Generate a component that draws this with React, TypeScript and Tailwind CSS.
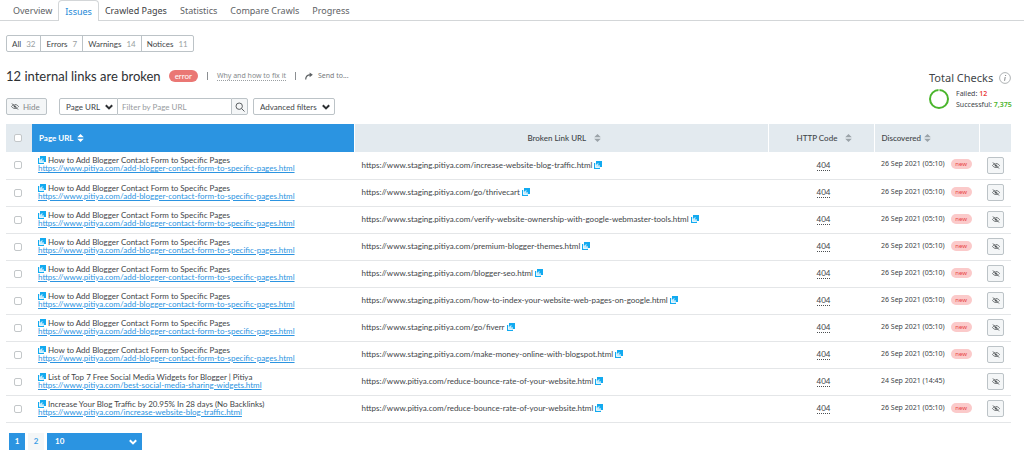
import React from "react";

const title = "How to Add Blogger Contact Form to Specific Pages";
const url = "https://www.pitiya.com/add-blogger-contact-form-to-specific-pages.html";
const base = "https://www.staging.pitiya.com/";
const recent = "26 Sep 2021 (05:10)";

type Row = { title: string; url: string; broken: string; date: string; fresh: boolean };

const rows: Row[] = [
  ...[
    "increase-website-blog-traffic.html",
    "go/thrivecart",
    "verify-website-ownership-with-google-webmaster-tools.html",
    "premium-blogger-themes.html",
    "blogger-seo.html",
    "how-to-index-your-website-web-pages-on-google.html",
    "go/fiverr",
    "make-money-online-with-blogspot.html",
  ].map((path) => ({ title, url, broken: base + path, date: recent, fresh: true })),
  {
    title: "List of Top 7 Free Social Media Widgets for Blogger | Pitiya",
    url: "https://www.pitiya.com/best-social-media-sharing-widgets.html",
    broken: "https://www.pitiya.com/reduce-bounce-rate-of-your-website.html",
    date: "24 Sep 2021 (14:45)",
    fresh: false,
  },
  {
    title: "Increase Your Blog Traffic by 20.95% In 28 days (No Backlinks)",
    url: "https://www.pitiya.com/increase-website-blog-traffic.html",
    broken: "https://www.pitiya.com/reduce-bounce-rate-of-your-website.html",
    date: recent,
    fresh: true,
  },
];

function Sort({ className }: { className: string }) {
  return (
    <svg viewBox="0 0 7 8" className={`inline-block h-2 w-[7px] shrink-0 ${className}`} fill="currentColor" aria-hidden="true">
      <path d="M3.5 0 6.8 3.3H.2zM3.5 8 .2 4.7h6.6z" />
    </svg>
  );
}

function External() {
  return (
    <svg viewBox="0 0 8 8" className="inline-block size-2 shrink-0" aria-hidden="true">
      <path d="M0 2h1.2v4.8H6V8H0z" fill="#12aaf0" />
      <path d="M2 0h6v6H2z" fill="#12aaf0" />
      <path d="M1.2 6.8V4.6L3.6 2.4h1.6L4 3.8l.9.9 1-1v2.1L4.4 6.8z" fill="white" opacity=".75" />
    </svg>
  );
}

function EyeOff({ className }: { className: string }) {
  return (
    <svg viewBox="0 0 16 14" className={`shrink-0 ${className}`} fill="none" stroke="currentColor" strokeWidth="1.4" aria-hidden="true">
      <path d="M1 7c3.4-5.3 10.6-5.3 14 0-3.4 5.3-10.6 5.3-14 0z" />
      <circle cx="8" cy="7" r="1.6" fill="currentColor" />
      <path d="M3.4.2 15.4 12.2" stroke="#f4f6f7" strokeWidth="1.6" />
      <path d="M2 1l12 12" strokeWidth="1.8" />
    </svg>
  );
}

function Chevron({ className }: { className: string }) {
  return (
    <svg viewBox="0 0 8 6" className={`pointer-events-none absolute h-1.5 w-2 ${className}`} fill="none" stroke="currentColor" strokeWidth="2" aria-hidden="true">
      <path d="M.8 1.2 4 4.4l3.2-3.2" />
    </svg>
  );
}

const tabs = ["Overview", "Issues", "Crawled Pages", "Statistics", "Compare Crawls", "Progress"];
const filters = [["All", "32"], ["Errors", "7"], ["Warnings", "14"], ["Notices", "11"]];
const box = "block size-2 appearance-none rounded-[2px] border border-[#c3c7c9] bg-white";

export default function App() {
  return (
    <main className="bg-white font-[Lato,sans-serif] text-[8px] leading-2 text-[#414548]">
      <nav className="flex h-[21px] border-b border-[#d3d6d8] font-['Noto_Sans',sans-serif] text-[9px] text-[#5e6265]">
        {tabs.map((tab) => (
          <a
            key={tab}
            href="#"
            className={
              tab === "Issues"
                ? "mr-[6px] -mb-px ml-[6px] flex items-center rounded-t-sm border border-b-0 border-[#d3d6d8] bg-white px-[6px] pt-px text-[#2489d8]"
                : tab === "Crawled Pages"
                  ? "mr-[13px] flex items-center pt-px text-[#3c4043]"
                  : tab === "Overview"
                    ? "ml-[13px] flex items-center pt-px"
                    : "mr-[13px] flex items-center pt-px"
            }
          >
            {tab}
          </a>
        ))}
      </nav>

      <div className="pr-[13px] pl-[6px]">
        <div className="flex pt-[14px]">
          <div className="flex h-[17px] divide-x divide-[#bcc3c7] rounded-[2px] border border-[#bcc3c7]">
            {filters.map(([name, count]) => (
              <button key={name} type="button" className="flex items-center gap-[5px] px-[5px]">
                {name} <span className="text-[#9a9fa2]">{count}</span>
              </button>
            ))}
          </div>
        </div>

        <div className="flex items-end justify-between pt-[14px]">
          <div>
            <div className="flex h-5 items-center">
              <h1 className="text-[13px] leading-5 text-[#2d3033]">12 internal links are broken</h1>
              <span className="ml-2 flex h-3 items-center rounded-full bg-[#ea7774] px-[6px] text-white">error</span>
              <span className="mx-[9px] h-2 w-px bg-[#8b8f92]" />
              <a href="#" className="border-b border-dotted border-[#9a9fa2] font-['Noto_Sans',sans-serif] text-[7px] text-[#85898c]">Why and how to fix it</a>
              <span className="mx-[9px] h-2 w-px bg-[#8b8f92]" />
              <button type="button" className="flex items-center gap-[5px] font-['Noto_Sans',sans-serif] text-[7px] text-[#76797c]">
                <svg viewBox="0 0 8 8" className="size-2" fill="none" stroke="#5b5f62" strokeWidth="1.2" aria-hidden="true">
                  <path d="M.7 7.5C.7 4.4 2.5 2.8 5 2.8" />
                  <path d="M4.6.4 7.8 2.8 4.6 5.2z" fill="#5b5f62" stroke="none" />
                </svg>
                Send to...
              </button>
            </div>
            <div className="mt-3 flex h-[17px]">
              <button type="button" className="flex w-[41px] items-center gap-[4px] rounded-[2px] border border-[#bcc3c7] bg-[#f4f6f7] pl-[4px] text-[#85898c]">
                <EyeOff className="h-[7px] w-2 text-[#44484b]" />
                Hide
              </button>
              <div className="relative ml-3 w-[59px]">
                <select aria-label="Filter field" className="h-full w-full appearance-none rounded-l-[2px] border border-[#bcc3c7] bg-white pl-[6px]">
                  <option>Page URL</option>
                </select>
                <Chevron className="top-[6px] right-[5px] text-[#2d3033]" />
              </div>
              <input aria-label="Filter by Page URL" placeholder="Filter by Page URL" className="w-[113px] border-y border-[#bcc3c7] px-[4px] placeholder:text-[#979b9e]" />
              <button type="button" aria-label="Search" className="flex w-[17px] items-center justify-center rounded-r-[2px] border border-[#bcc3c7] bg-[#f4f6f7]">
                <svg viewBox="0 0 10 10" className="size-[10px]" fill="none" stroke="#5b5f62" aria-hidden="true">
                  <circle cx="4.2" cy="4.2" r="3.2" />
                  <path d="m6.6 6.6 2.9 2.9" />
                </svg>
              </button>
              <div className="relative ml-[5px] w-[82px]">
                <select aria-label="Advanced filters" className="h-full w-full appearance-none rounded-[2px] border border-[#bcc3c7] bg-white pl-[6px]">
                  <option>Advanced filters</option>
                </select>
                <Chevron className="top-[6px] right-[5px] text-[#2d3033]" />
              </div>
            </div>
          </div>

          <section className="w-[82px] pb-[5px] font-['Noto_Sans',sans-serif] text-[7px]">
            <h2 className="flex items-center justify-between text-[11px] leading-3 whitespace-nowrap">
              Total Checks
              <svg viewBox="0 0 12 12" className="size-3" fill="none" aria-label="Info">
                <circle cx="6" cy="6" r="5.4" stroke="#9a9fa2" strokeWidth=".8" />
                <path d="M6.2 5 5.6 8.8M6.6 3v1" stroke="#85898c" />
              </svg>
            </h2>
            <div className="mt-[4px] flex items-center gap-[7px]">
              <svg viewBox="0 0 20 20" className="size-5 shrink-0" fill="none" aria-hidden="true">
                <circle cx="10" cy="10" r="9" stroke="#4ab52c" strokeWidth="2" />
                <path d="M10 0v2.2" stroke="white" />
              </svg>
              <div className="leading-[11px] whitespace-nowrap">
                <p>Failed: <b className="font-semibold text-[#ea3f3f]">12</b></p>
                <p>Successful: <b className="font-semibold text-[#4ab52c]">7,375</b></p>
              </div>
            </div>
          </section>
        </div>

        <table className="mt-[9px] w-full table-fixed border-collapse text-left">
          <colgroup>
            <col className="w-[26px]" />
            <col className="w-[32.1%]" />
            <col />
            <col className="w-[106px]" />
            <col className="w-[105px]" />
            <col className="w-[32px]" />
          </colgroup>
          <thead>
            <tr className="h-7 bg-[#e3eaef]">
              <th className="pl-2"><input type="checkbox" aria-label="Select all rows" className={box} /></th>
              <th className="bg-[#2b94e1] pl-[7px] font-bold text-white">
                <span className="flex items-center gap-[3px]">Page URL <Sort className="text-white" /></span>
              </th>
              <th className="border-x border-white font-medium">
                <span className="flex items-center justify-center gap-2 pl-[6px]">Broken Link URL <Sort className="text-[#9ba3a8]" /></span>
              </th>
              <th className="border-r border-white font-medium">
                <span className="flex items-center justify-center gap-2 pl-[7px]">HTTP Code <Sort className="text-[#9ba3a8]" /></span>
              </th>
              <th className="border-r border-white pl-[7px] font-medium">
                <span className="flex items-center gap-[3px]">Discovered <Sort className="text-[#9ba3a8]" /></span>
              </th>
              <th aria-label="Actions" />
            </tr>
          </thead>
          <tbody>
            {rows.map((row) => (
              <tr key={row.broken + row.title} className="h-[27px] border-b border-[#e4e6e8]">
                <td className="pl-2"><input type="checkbox" aria-label={`Select ${row.title}`} className={box} /></td>
                <td className="pb-[2px] pl-[6px] whitespace-nowrap">
                  <div className="flex items-center gap-[2px]"><External />{row.title}</div>
                  <a href={row.url} className="block text-[#2b94e1] underline">{row.url}</a>
                </td>
                <td className="pb-px pl-[7px] whitespace-nowrap">
                  <span className="flex items-center gap-[2px]">{row.broken}<External /></span>
                </td>
                <td className="pb-px pl-[5px] text-center"><span className="border-b border-dotted border-[#4b4f52]">404</span></td>
                <td className="pb-[2px] pl-[7px] font-['Noto_Sans',sans-serif] text-[7px] whitespace-nowrap">
                  <span className="flex items-center gap-[6px]">
                    {row.date}
                    {row.fresh && <span className="flex h-[10px] w-[21px] items-center justify-center rounded-full bg-[#fbcaca] text-[6px] text-[#e8403f]">new</span>}
                  </span>
                </td>
                <td className="pl-2">
                  <button type="button" aria-label="Hide issue" className="flex size-[17px] items-center justify-center rounded-[2px] border border-[#bcc3c7] bg-[#f4f6f7]">
                    <EyeOff className="h-[7px] w-2 text-[#44484b]" />
                  </button>
                </td>
              </tr>
            ))}
          </tbody>
        </table>

        <div className="flex h-[27px] gap-[3px] pt-[10px] pl-[3px] font-bold">
          <button type="button" className="h-[17px] w-4 bg-[#2b94e1] text-white">1</button>
          <button type="button" className="h-[17px] w-4 bg-[#f4f6f7] text-[#3c9fe6]">2</button>
          <div className="relative h-[17px] w-[95px]">
            <select aria-label="Rows per page" className="h-full w-full appearance-none bg-[#2b94e1] pl-2 text-white">
              <option>10</option>
            </select>
            <Chevron className="top-[6px] right-[5px] text-white" />
          </div>
        </div>
      </div>
    </main>
  );
}
